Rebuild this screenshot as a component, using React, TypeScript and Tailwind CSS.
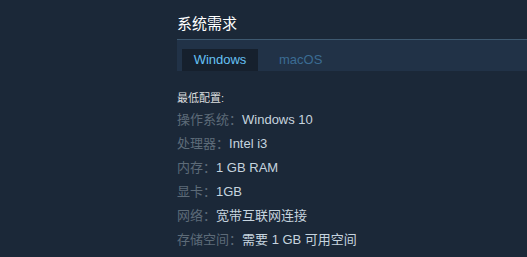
import React from "react";

const rows: [string, string][] = [
  ["操作系统：", "Windows 10"],
  ["处理器：", "Intel i3"],
  ["内存：", "1 GB RAM"],
  ["显卡：", "1GB"],
  ["网络：", "宽带互联网连接"],
  ["存储空间：", "需要 1 GB 可用空间"],
];

export default function App() {
  return (
    <div
      className="w-[527px] h-[257px] bg-[#1b2838] overflow-hidden pl-[177px]"
      style={{ fontFamily: '"Liberation Sans", Arial, "Noto Sans CJK SC", sans-serif' }}
    >
      <div className="pt-[14px] text-[15px] leading-[20px] text-white">系统需求</div>
      <div className="mt-[5px] border-t border-[#3e5970] bg-[#213247] pt-[8px] pl-[5px] flex items-end h-[32px]">
        <div className="w-[76px] h-[22px] bg-[#16202d] flex items-center justify-center text-[13px] text-[#66c0f4]">
          Windows
        </div>
        <div className="ml-[21px] h-[22px] flex items-center text-[13px] text-[#3b6c93]">macOS</div>
      </div>
      <div className="mt-[20px] text-[11px] leading-[14px] text-[#dcdedf]">最低配置:</div>
      <div className="mt-[3px] flex flex-col">
        {rows.map(([k, v]) => (
          <div key={k} className="h-[24px] flex items-center text-[13px]">
            <span className="text-[#5d6b78]">{k}</span>
            <span className="text-[#c6d4df]">{v}</span>
          </div>
        ))}
      </div>
    </div>
  );
}
